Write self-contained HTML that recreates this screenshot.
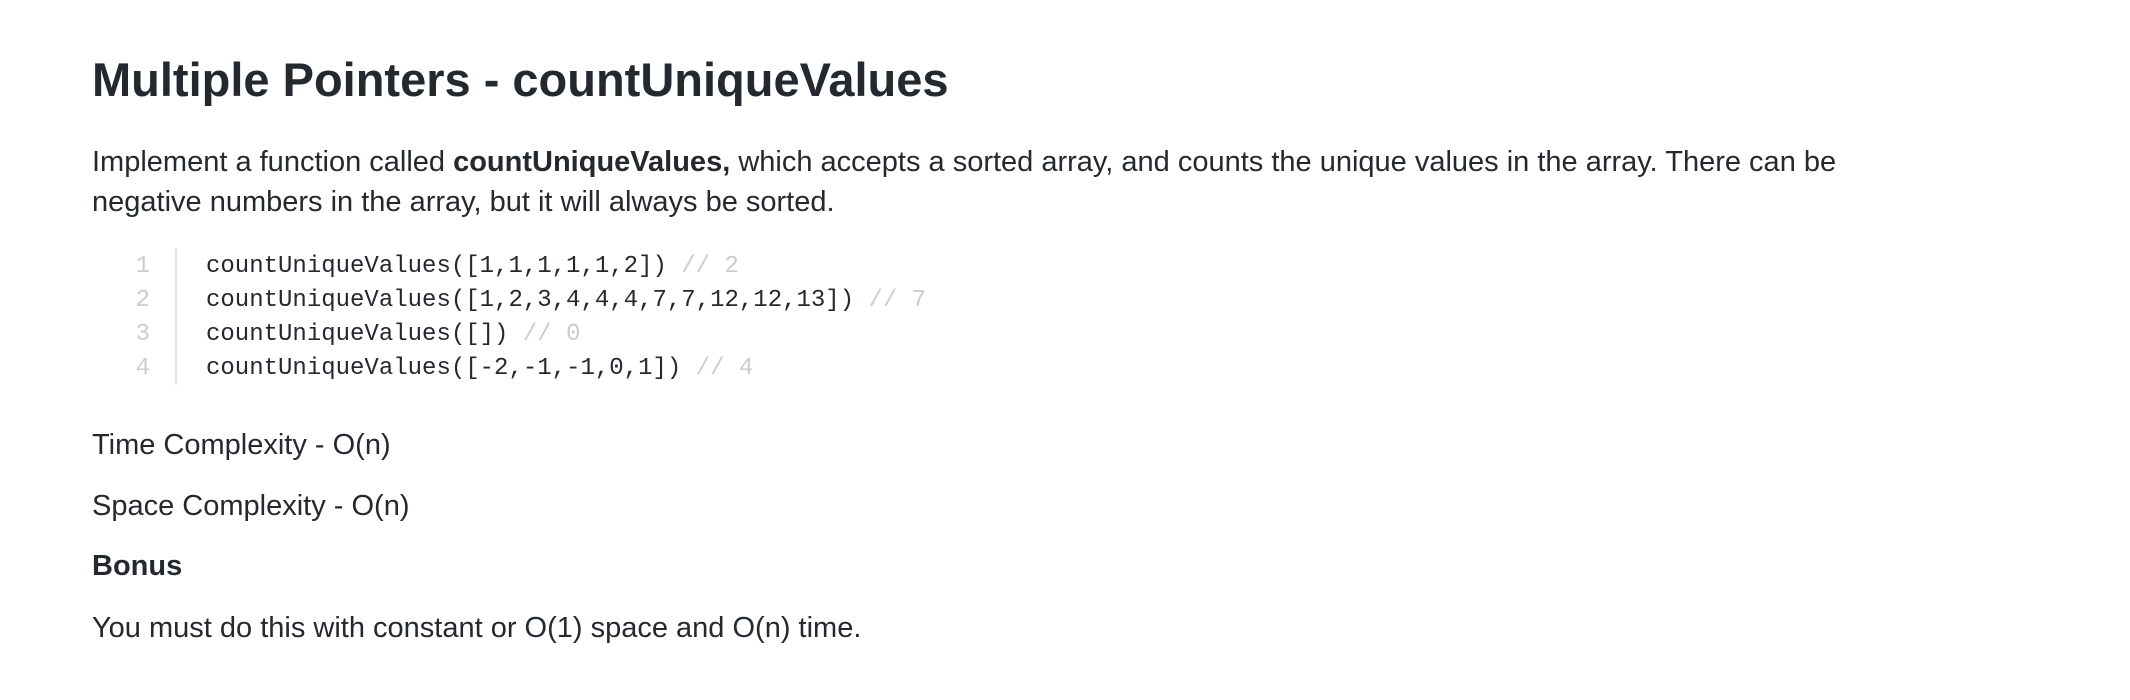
<!DOCTYPE html>
<html><head><meta charset="utf-8"><style>
html,body{margin:0;padding:0;background:#fff;}
body{width:2130px;height:700px;overflow:hidden;font-family:"Liberation Sans",sans-serif;color:#24292f;position:relative;}
.a{position:absolute;left:92px;white-space:nowrap;}
h1{margin:0;font-size:47px;font-weight:bold;letter-spacing:0px;top:52px;}
.p{font-size:29px;line-height:40px;}
.code{position:absolute;left:120px;top:248px;font-family:"Liberation Mono","DejaVu Sans Mono",monospace;font-size:24px;line-height:34px;}
.ln{position:absolute;left:0;width:30px;text-align:right;color:#ccc;}
.bar{position:absolute;left:55px;top:0;width:2px;height:137px;background:#e5e5e5;}
.c{position:absolute;left:86px;white-space:pre;color:#24292f;}
.cm{color:#ccc;}
</style></head><body>
<h1 class="a">Multiple Pointers - countUniqueValues</h1>
<div class="a p" style="top:142px;">Implement a function called <b>countUniqueValues,</b> which accepts a sorted array, and counts the unique values in the array. There can be<br>negative numbers in the array, but it will always be sorted.</div>
<div class="code">
<div class="bar"></div>
<div class="ln" style="top:2px">1</div><div class="c" style="top:2px">countUniqueValues([1,1,1,1,1,2]) <span class="cm">// 2</span></div>
<div class="ln" style="top:36px">2</div><div class="c" style="top:36px">countUniqueValues([1,2,3,4,4,4,7,7,12,12,13]) <span class="cm">// 7</span></div>
<div class="ln" style="top:70px">3</div><div class="c" style="top:70px">countUniqueValues([]) <span class="cm">// 0</span></div>
<div class="ln" style="top:104px">4</div><div class="c" style="top:104px">countUniqueValues([-2,-1,-1,0,1]) <span class="cm">// 4</span></div>
</div>
<div class="a p" style="top:425px;">Time Complexity - O(n)</div>
<div class="a p" style="top:486px;">Space Complexity - O(n)</div>
<div class="a p" style="top:546px;"><b>Bonus</b></div>
<div class="a p" style="top:608px;">You must do this with constant or O(1) space and O(n) time.</div>
</body></html>
